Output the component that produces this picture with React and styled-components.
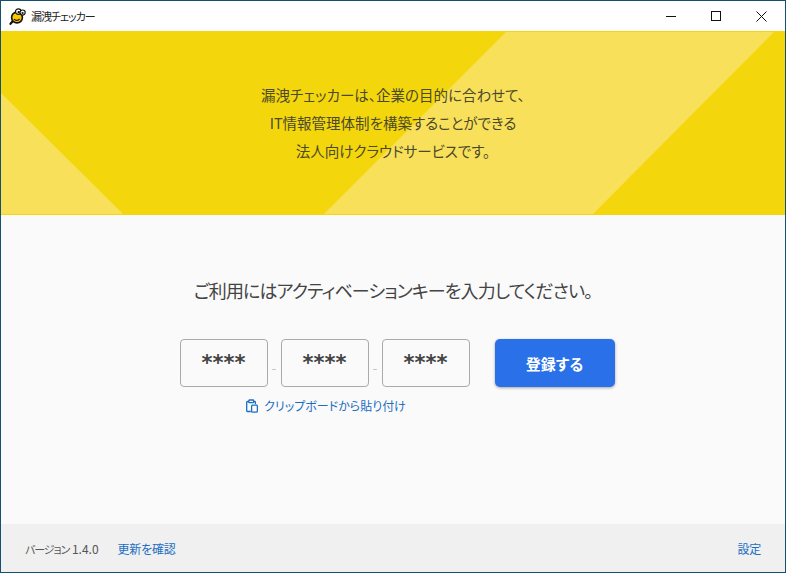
import React from "react";
import styled, { createGlobalStyle } from "styled-components";

const Global = createGlobalStyle`
  html, body { margin: 0; padding: 0; background: #fff; }
  body { font-family: "Noto Sans CJK JP", "Noto Sans", sans-serif; font-feature-settings: "palt"; }
  * { box-sizing: border-box; }
`;

const Window = styled.div`
  width: 786px;
  height: 573px;
  border: 1px solid #14506f;
  display: flex;
  flex-direction: column;
  background: #fafafa;
  overflow: hidden;
`;

const TitleBar = styled.div`
  height: 30px;
  flex: none;
  background: #fff;
  display: flex;
  align-items: center;
  padding: 0 1px 0 8px;
`;

const AppTitle = styled.span`
  margin-left: 5px;
  font-size: 11px;
  letter-spacing: -1px;
  color: #222;
  flex: 1;
`;

const WinButton = styled.div`
  width: 45px;
  height: 30px;
  display: flex;
  align-items: center;
  justify-content: center;
`;

const Banner = styled.header`
  position: relative;
  height: 184px;
  flex: none;
  background: #f4d60c;
  display: flex;
  align-items: center;
  justify-content: center;
`;

const BannerArt = styled.svg`
  position: absolute;
  inset: 0;
  width: 100%;
  height: 100%;
`;

const BannerText = styled.p`
  position: relative;
  margin: 0;
  text-align: center;
  font-size: 14.5px;
  line-height: 28px;
  color: #4a4a2a;
`;

const Main = styled.main`
  flex: 1;
  display: flex;
  flex-direction: column;
  align-items: center;
  padding-top: 60px;
`;

const Heading = styled.h1`
  margin: 0;
  font-size: 18px;
  letter-spacing: -0.85px;
  line-height: 30px;
  font-weight: 400;
  color: #444;
`;

const Form = styled.div`
  display: flex;
  align-items: flex-start;
  gap: 25px;
  margin-top: 34px;
  margin-left: 8px;
`;

const KeyColumn = styled.div`
  display: flex;
  flex-direction: column;
  align-items: center;
`;

const KeyRow = styled.div`
  display: flex;
  align-items: center;
`;

const KeyBox = styled.div`
  width: 88px;
  height: 48px;
  border: 1px solid #aaa;
  border-radius: 4px;
  background: #fafafa;
  display: flex;
  align-items: center;
  justify-content: center;
  font-family: "DejaVu Sans", sans-serif;
  font-size: 21px;
  font-weight: 700;
  color: #444;
`;

const Dash = styled.span`
  width: 13px;
  text-align: center;
  font-size: 14px;
  line-height: 12px;
  margin-top: 8px;
  color: #c4c4c4;
`;

const PasteLink = styled.a`
  display: flex;
  align-items: center;
  gap: 6px;
  margin-top: 10px;
  padding-left: 3px;
  font-size: 12px;
  line-height: 18px;
  color: #1b6ec2;
`;

const Submit = styled.button`
  width: 120px;
  height: 48px;
  border: none;
  border-radius: 5px;
  background: #2a70e8;
  box-shadow: 0 1px 3px rgba(0, 0, 0, 0.35);
  color: #fff;
  font: 700 15px "Noto Sans CJK JP", sans-serif;
  font-feature-settings: "palt";
`;

const Footer = styled.footer`
  height: 48px;
  flex: none;
  background: #f0f0f0;
  display: flex;
  align-items: center;
  padding: 0 24px;
  font-size: 12px;
  color: #555;
`;

const VersionKana = styled.span`
  font-size: 11px;
  letter-spacing: -1.1px;
`;

const FooterLink = styled.a`
  color: #1b6ec2;
  letter-spacing: -0.2px;
  margin-left: ${(p) => p.$gap || 0}px;
`;

const Spacer = styled.div`
  flex: 1;
`;

const Logo = () => (
  <svg width="17" height="17" viewBox="0 0 17 17">
    <path d="M1.5 15.8L5 11.8" stroke="#111" strokeWidth="2.2" strokeLinecap="round" />
    <ellipse cx="8" cy="9.5" rx="5.4" ry="5.4" fill="#f9c800" stroke="#111" strokeWidth="1.6" />
    <path d="M5 11.2c1.5 1.6 4.2 1.6 5.6-.3" fill="none" stroke="#111" strokeWidth="1.1" />
    <circle cx="9.3" cy="3.6" r="2.8" fill="#fff" stroke="#111" strokeWidth="1.2" />
    <circle cx="13.6" cy="4.6" r="2.6" fill="#fff" stroke="#111" strokeWidth="1.2" />
    <circle cx="9.7" cy="4.1" r="1.2" fill="#111" />
    <circle cx="13.6" cy="5" r="1.1" fill="#111" />
  </svg>
);

const PasteIcon = () => (
  <svg width="12" height="14" viewBox="0 0 12 14" fill="none" stroke="#1b6ec2" strokeWidth="1.3">
    <path d="M2.8 2.5H1.5a.8.8 0 0 0-.8.8v8.4a.8.8 0 0 0 .8.8H4.8" />
    <path d="M7.6 2.5h1a.8.8 0 0 1 .8.8V5" />
    <rect x="2.8" y="1" width="4.8" height="2.6" rx=".6" />
    <rect x="5.6" y="6.2" width="5.8" height="7" rx="1" />
  </svg>
);

export default function App() {
  return (
    <Window>
      <Global />
      <TitleBar>
        <Logo />
        <AppTitle>漏洩チェッカー</AppTitle>
        <WinButton>
          <svg width="11" height="11" viewBox="0 0 11 11"><path d="M0 5.5H10" stroke="#111" /></svg>
        </WinButton>
        <WinButton>
          <svg width="11" height="11" viewBox="0 0 11 11"><rect x=".5" y=".5" width="9" height="9" fill="none" stroke="#111" /></svg>
        </WinButton>
        <WinButton>
          <svg width="11" height="11" viewBox="0 0 11 11"><path d="M.5 .5L10.5 10.5M10.5 .5L.5 10.5" stroke="#111" /></svg>
        </WinButton>
      </TitleBar>
      <Banner>
        <BannerArt viewBox="0 0 784 184">
          <polygon points="505,1 773,1 592,183 323,183" fill="#f9e05a" />
          <polygon points="0,62 122,183 0,183" fill="#f9e05a" />
        </BannerArt>
        <BannerText>
          漏洩チェッカーは、企業の目的に合わせて、<br />
          IT情報管理体制を構築することができる<br />
          法人向けクラウドサービスです。
        </BannerText>
      </Banner>
      <Main>
        <Heading>ご利用にはアクティベーションキーを入力してください。</Heading>
        <Form>
          <KeyColumn>
            <KeyRow>
              <KeyBox>****</KeyBox>
              <Dash>-</Dash>
              <KeyBox>****</KeyBox>
              <Dash>-</Dash>
              <KeyBox>****</KeyBox>
            </KeyRow>
            <PasteLink><PasteIcon />クリップボードから貼り付け</PasteLink>
          </KeyColumn>
          <Submit>登録する</Submit>
        </Form>
      </Main>
      <Footer>
        <span><VersionKana>バージョン</VersionKana> 1.4.0</span>
        <FooterLink $gap={19}>更新を確認</FooterLink>
        <Spacer />
        <FooterLink>設定</FooterLink>
      </Footer>
    </Window>
  );
}
